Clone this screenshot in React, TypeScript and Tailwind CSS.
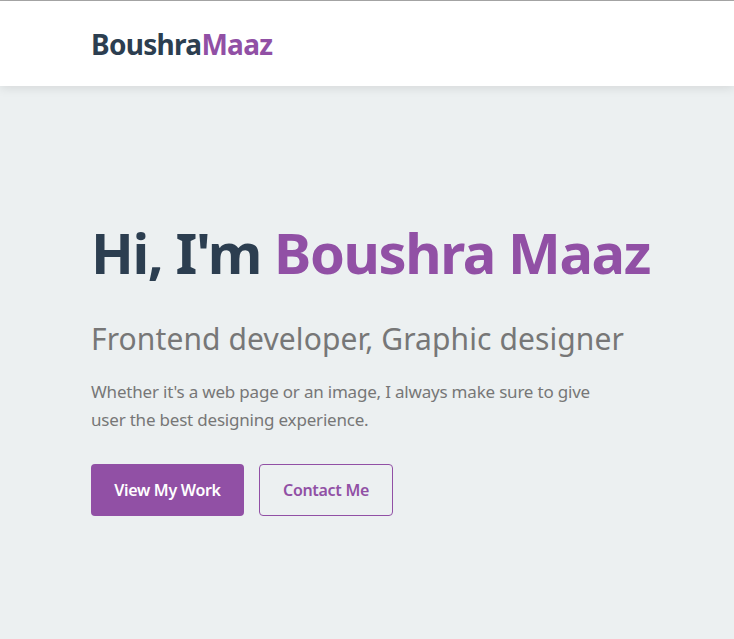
import React from 'react';

const font = { fontFamily: '"Noto Sans", "Open Sans", sans-serif' };

const App: React.FC = () => {
  return (
    <div className="min-h-screen bg-[#ecf0f1] border-t border-[#a9a9a9]" style={font}>
      <nav className="h-[85px] bg-white shadow-[0_2px_10px_rgba(0,0,0,0.1)] flex items-center px-[91px]">
        <a href="#" className="text-[28px] font-bold leading-none text-[#2c3e50] tracking-[-0.7px]">
          Boushra<span className="text-[#9150a5]">Maaz</span>
        </a>
      </nav>

      <section className="px-[91px] pt-[133px]">
        <h1 className="text-[56px] font-bold leading-[1.2] text-[#2c3e50] tracking-[-1.4px] whitespace-nowrap">
          Hi, I'm <span className="text-[#9150a5]">Boushra Maaz</span>
        </h1>
        <h2 className="mt-[35px] text-[30px] leading-[1.2] text-[#777777] tracking-[0.1px]">
          Frontend developer, Graphic designer
        </h2>
        <p className="mt-[21px] max-w-[530px] text-[17px] leading-[28px] text-[#777777] tracking-[-0.2px]">
          Whether it's a web page or an image, I always make sure to give user the best designing experience.
        </p>
        <div className="mt-[30px] flex gap-[15px]">
          <button className="h-[52px] w-[153px] rounded bg-[#9150a5] text-white font-semibold text-base tracking-[-0.3px]">
            View My Work
          </button>
          <button className="h-[52px] w-[134px] rounded border border-[#9150a5] text-[#9150a5] font-semibold text-base tracking-[-0.3px]">
            Contact Me
          </button>
        </div>
      </section>
    </div>
  );
};

export default App;
